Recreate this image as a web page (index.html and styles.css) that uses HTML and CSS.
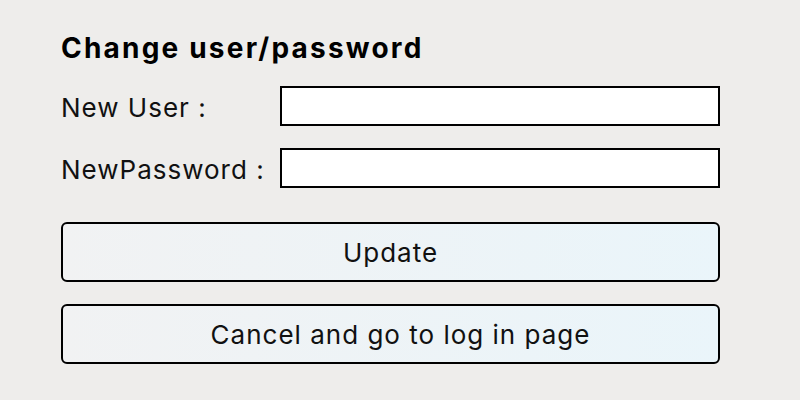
FILE: index.html
```html
<!DOCTYPE html>
<html>
<head>
<meta charset="utf-8">
<link rel="stylesheet" href="styles.css">
</head>
<body>
<div class="panel">
  <h1 class="title">Change user/password</h1>
  <div class="row">
    <label class="label">New User :</label>
    <input class="field" type="text">
  </div>
  <div class="row">
    <label class="label">NewPassword :</label>
    <input class="field" type="password">
  </div>
  <button class="btn first">Update</button>
  <button class="btn cancel">Cancel and go to log in page</button>
</div>
</body>
</html>
```
FILE: styles.css
```css
html, body {
  margin: 0;
  padding: 0;
  background: #eeedeb;
}
.panel {
  width: 659px;
  padding: 29px 0 0 61px;
  display: flex;
  flex-direction: column;
  font-family: Inter, "Noto Sans", sans-serif;
  color: #111;
}
.title {
  margin: 0;
  font-size: 28px;
  font-weight: 700;
  letter-spacing: 2.2px;
  line-height: 38px;
  color: #000;
}
.row {
  display: flex;
  align-items: flex-start;
  margin-top: 22px;
}
.row:first-of-type {
  margin-top: 19px;
}
.label {
  box-sizing: border-box;
  width: 219px;
  height: 40px;
  padding-top: 2px;
  font-size: 26px;
  letter-spacing: 1px;
  line-height: 40px;
}
.field {
  box-sizing: border-box;
  width: 440px;
  height: 40px;
  margin: 0;
  border: 2px solid #000;
  border-radius: 0;
  background: #fff;
  outline: none;
}
.btn {
  box-sizing: border-box;
  width: 659px;
  height: 60px;
  margin-top: 22px;
  padding: 0;
  border: 2px solid #000;
  border-radius: 6px;
  background: linear-gradient(90deg, #f1f2f3, #eaf5fa);
  font-family: Inter, "Noto Sans", sans-serif;
  font-size: 26px;
  letter-spacing: 1px;
  color: #111;
}
.btn.first {
  margin-top: 34px;
}
.btn.cancel {
  padding-left: 20px;
}
```
